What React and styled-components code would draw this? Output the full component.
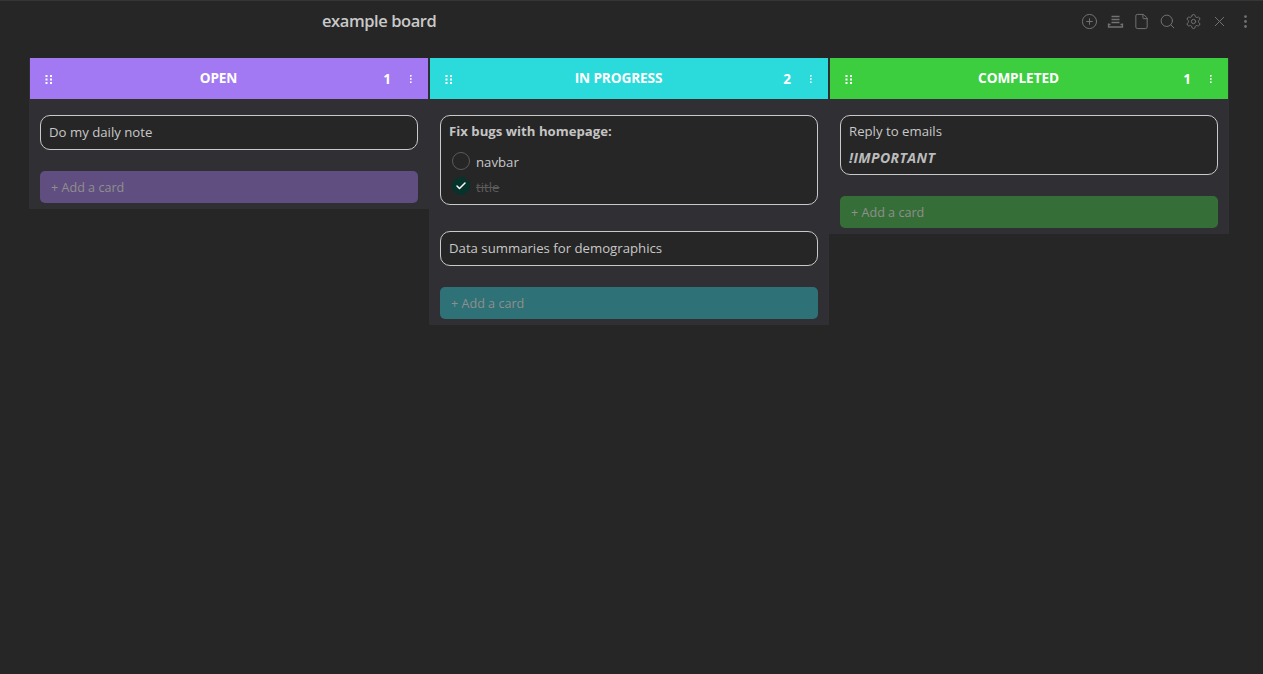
import React from 'react';
import styled, {createGlobalStyle} from 'styled-components';
import {CirclePlus, File, Search, Settings, X, EllipsisVertical, Check} from 'lucide-react';

const GlobalStyle = createGlobalStyle`
    html, body {
        margin: 0;
        height: 100%;
        background: #262626;
    }
    body {
        font-family: "Open Sans", "Noto Sans", sans-serif;
        overflow: hidden;
    }
`;

const Page = styled.div`
    height: 674px;
    box-sizing: border-box;
    border-top: 1px solid #363636;
    background: #262626;
`;

const TitleBar = styled.div`
    height: 57px;
    display: flex;
    align-items: flex-start;
    justify-content: space-between;
    padding-left: 322px;
    padding-right: 9px;
    box-sizing: border-box;
`;

const Title = styled.div`
    margin-top: 8px;
    font-size: 16.5px;
    line-height: 24px;
    font-weight: 600;
    color: #c9c9c9;
    letter-spacing: -0.42px;
`;

const Actions = styled.div`
    display: flex;
    align-items: center;
    gap: 9px;
    margin-top: 12px;
    color: #727272;
`;

const Board = styled.div`
    display: flex;
    align-items: flex-start;
    padding-left: 29px;
`;

const Column = styled.section`
    width: 400px;
    background: #302f34;
`;

const ColumnHeader = styled.header`
    height: 41px;
    margin: 0 1px;
    padding: 0 15px 0 14px;
    background: ${props => props.$color};
    display: flex;
    align-items: center;
    color: #fff;
`;

const ColumnTitle = styled.h2`
    flex: 1;
    margin: 0 0 1px;
    text-align: center;
    font-size: 13.6px;
    line-height: 18px;
    font-weight: 700;
    letter-spacing: -0.1px;
`;

const Count = styled.span`
    width: 8px;
    margin-right: 18px;
    font-size: 13.5px;
    font-weight: 700;
    line-height: 18px;
    text-align: center;
`;

const ColumnBody = styled.div`
    padding: 16px 11px 6px;
`;

const Card = styled.article`
    box-sizing: border-box;
    min-height: 35px;
    margin-bottom: ${props => props.$gap}px;
    padding: ${props => props.$pad || '7px 8px'};
    border: 1px solid #c9c9c9;
    border-radius: 10px;
    background: #262626;
    color: #c8c8c8;
    font-size: 13.2px;
    line-height: 19px;
`;

const CardHeading = styled.div`
    font-weight: 700;
    color: #c4c4c4;
    margin-bottom: 9px;
`;

const Important = styled.div`
    margin-top: 7px;
    font-size: 14px;
    font-weight: 700;
    font-style: italic;
    letter-spacing: 0.4px;
    color: #bcbcbc;
`;

const Task = styled.div`
    display: flex;
    align-items: center;
    height: 25px;
    padding-left: 3px;
    color: ${props => props.$done ? '#5c5c5c' : '#c8c8c8'};
    text-decoration: ${props => props.$done ? 'line-through' : 'none'};
`;

const Tick = styled.span`
    box-sizing: border-box;
    flex: none;
    width: 18px;
    height: 18px;
    margin-right: 6px;
    margin-bottom: 3px;
    border-radius: 50%;
    border: 1px solid ${props => props.$done ? '#06332b' : '#5a5a5a'};
    background: ${props => props.$done ? '#06332b' : 'transparent'};
    color: #fff;
    display: flex;
    align-items: center;
    justify-content: center;
`;

const AddCard = styled.button`
    display: block;
    width: 100%;
    height: 32px;
    padding: 1px 11px 0;
    border: none;
    border-radius: 5px;
    background: ${props => props.$color};
    color: #8f8f8f;
    font: inherit;
    font-size: 12.6px;
    text-align: left;
`;

const Grip = () => (
    <svg width="10" height="10" viewBox="0 0 10 10" fill="#fff">
        {[1, 4.5, 8].map(y => [1.5, 6].map(x => (
            <rect key={`${x}-${y}`} x={x} y={y} width="2" height="2" />
        )))}
    </svg>
);

const Kebab = () => (
    <svg width="4" height="10" viewBox="0 0 4 10" fill="#fff">
        <rect x="1" y="1" width="1.6" height="1.6" />
        <rect x="1" y="4.2" width="1.6" height="1.6" />
        <rect x="1" y="7.4" width="1.6" height="1.6" />
    </svg>
);

const StackIcon = () => (
    <svg width="17" height="17" viewBox="0 0 17 17" fill="none" stroke="currentColor" strokeWidth="1.3">
        <path d="M4.5 3.5h8M4.5 6.5h8M4.5 9.5h8" />
        <path d="M1.5 10.5v3.5h14v-3.5" />
        <path d="M1.5 11.5h2M13.5 11.5h2" />
    </svg>
);

const columns = [
    {title: 'OPEN', count: 1, color: '#a379f3', addColor: '#5f4e7f'},
    {title: 'IN PROGRESS', count: 2, color: '#2bdbdc', addColor: '#2e7176'},
    {title: 'COMPLETED', count: 1, color: '#3dce40', addColor: '#366e38'},
];

function Cards({index}) {
    if (index === 0) {
        return <Card $gap={21}>Do my daily note</Card>;
    }
    if (index === 2) {
        return (
            <Card $gap={21} $pad="6px 8px 7px">
                Reply to emails
                <Important>!IMPORTANT</Important>
            </Card>
        );
    }
    return (
        <>
            <Card $gap={26} $pad="6px 8px 4px">
                <CardHeading>Fix bugs with homepage:</CardHeading>
                <Task><Tick />navbar</Task>
                <Task $done><Tick $done><Check size={12} strokeWidth={3} /></Tick>title</Task>
            </Card>
            <Card $gap={21}>Data summaries for demographics</Card>
        </>
    );
}

export default function App() {
    return (
        <Page>
            <GlobalStyle />
            <TitleBar>
                <Title>example board</Title>
                <Actions>
                    <CirclePlus size={17} strokeWidth={1.4} />
                    <StackIcon />
                    <File size={17} strokeWidth={1.4} />
                    <Search size={17} strokeWidth={1.4} />
                    <Settings size={17} strokeWidth={1.4} />
                    <X size={17} strokeWidth={1.4} />
                    <EllipsisVertical size={17} strokeWidth={2} />
                </Actions>
            </TitleBar>
            <Board>
                {columns.map((col, i) => (
                    <Column key={col.title}>
                        <ColumnHeader $color={col.color}>
                            <Grip />
                            <ColumnTitle>{col.title}</ColumnTitle>
                            <Count>{col.count}</Count>
                            <Kebab />
                        </ColumnHeader>
                        <ColumnBody>
                            <Cards index={i} />
                            <AddCard $color={col.addColor}>+ Add a card</AddCard>
                        </ColumnBody>
                    </Column>
                ))}
            </Board>
        </Page>
    );
}
